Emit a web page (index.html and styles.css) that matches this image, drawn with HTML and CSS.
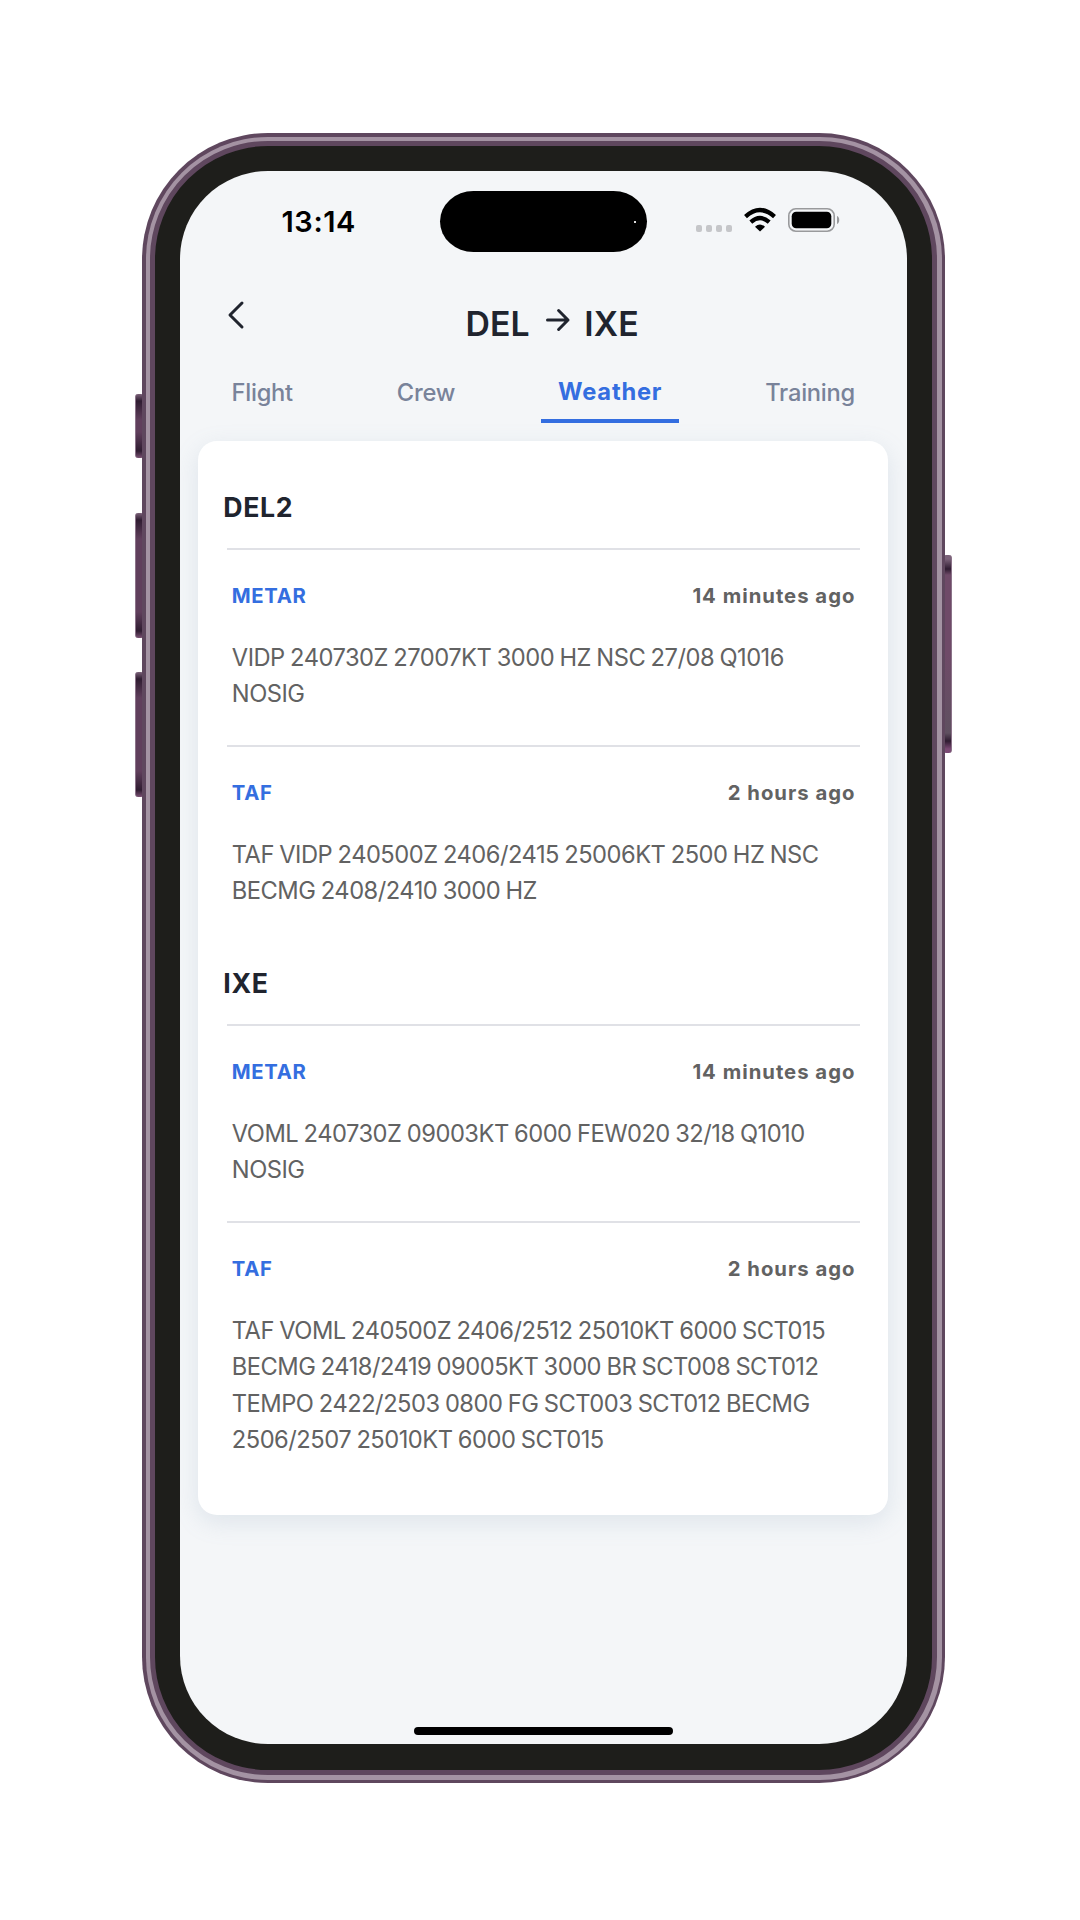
FILE: index.html
```html
<!DOCTYPE html>
<html lang="en">
<head>
<meta charset="utf-8">
<title>Flight weather</title>
<link rel="stylesheet" href="styles.css">
</head>
<body>
<main class="phone">
  <i class="key key-mute"></i><i class="key key-up"></i><i class="key key-down"></i><i class="key key-power"></i>
  <div class="rim"><div class="band"><div class="bezel">
    <div class="screen">
      <header class="status">
        <span class="time">13:14</span>
        <div class="island"><i class="lens"></i></div>
        <div class="indicators">
          <div class="signal"><i></i><i></i><i></i><i></i></div>
          <svg class="wifi" viewBox="0 0 32 24"><path d="M1.500 8.600Q16-4.600 30.500 8.600"/><path d="M6.800 14.200Q16 6 25.200 14.200"/><path class="solid" d="M11 18.800Q16 14 21 18.800L16 23.600Z"/></svg>
          <svg class="battery" viewBox="0 0 53 24"><rect class="shell" x=".8" y=".8" width="45.400" height="22.400" rx="7"/><rect x="3.700" y="3.700" width="39.600" height="16.600" rx="4.500"/><path class="nub" d="M49 8c3 1 3 7 0 8Z"/></svg>
        </div>
      </header>
      <div class="titlebar">
        <svg class="back" viewBox="0 0 16 28"><path d="M14 2 2 14 14 26"/></svg>
        <h1 class="route">DEL<svg class="arrow" viewBox="0 0 24 22"><path d="M1.500 11H22M12.600 1.500 22 11 12.600 20.500"/></svg>IXE</h1>
      </div>
      <nav class="tabs">
        <a class="tab">Flight</a><a class="tab">Crew</a><a class="tab active">Weather</a><a class="tab">Training</a>
      </nav>
      <article class="card">
        <section class="station">
          <h2>DEL2</h2>
          <div class="report">
            <div class="head"><b>METAR</b><span>14 minutes ago</span></div>
            <p>VIDP 240730Z 27007KT 3000 HZ NSC 27/08 Q1016<br>NOSIG</p>
          </div>
          <div class="report">
            <div class="head"><b>TAF</b><span>2 hours ago</span></div>
            <p>TAF VIDP 240500Z 2406/2415 25006KT 2500 HZ NSC<br>BECMG 2408/2410 3000 HZ</p>
          </div>
        </section>
        <section class="station">
          <h2>IXE</h2>
          <div class="report">
            <div class="head"><b>METAR</b><span>14 minutes ago</span></div>
            <p>VOML 240730Z 09003KT 6000 FEW020 32/18 Q1010<br>NOSIG</p>
          </div>
          <div class="report">
            <div class="head"><b>TAF</b><span>2 hours ago</span></div>
            <p>TAF VOML 240500Z 2406/2512 25010KT 6000 SCT015<br>BECMG 2418/2419 09005KT 3000 BR SCT008 SCT012<br>TEMPO 2422/2503 0800 FG SCT003 SCT012 BECMG<br>2506/2507 25010KT 6000 SCT015</p>
          </div>
        </section>
      </article>
      <div class="home"></div>
    </div>
  </div></div></div>
</main>
</body>
</html>
```
FILE: styles.css
```css
* { box-sizing: border-box; margin: 0; padding: 0; }
body { width: 1080px; height: 1920px; background: #fff; font-family: Inter, "Liberation Sans", sans-serif; color: #20242e; overflow: hidden; }
svg { display: block; fill: none; stroke: currentColor; stroke-linecap: round; stroke-linejoin: round; overflow: visible; }

/* Device frame */
.phone { position: relative; width: 803px; height: 1650px; margin: 133px 0 0 142px; }
.rim, .band, .bezel { height: 100%; }
.rim { position: relative; padding: 3.500px; border-radius: 126px; background: #5f475e; }
.band { padding: 4.500px; border-radius: 122px; background: #a493a3; }
.bezel { padding: 25px 25.500px 26px 25px; border: 5px solid #5f475e; border-radius: 118px; background: #1e1e1b; }
.screen { display: flex; flex-direction: column; height: 100%; border-radius: 88px; background: #f4f6f8; overflow: hidden; }

.key { position: absolute; width: 9px; border-radius: 3px; background: linear-gradient(#7b6279, #2f1c31 7px, #603f5c 26px, #603f5c calc(100% - 26px), #2f1c31 calc(100% - 7px), #7b5274); }
.key-mute, .key-up, .key-down { left: -7px; border-left: 1.500px solid #8b7389; }
.key-mute { top: 261px; height: 64px; }
.key-up { top: 380px; height: 125px; }
.key-down { top: 539px; height: 125px; }
.key-power { right: -7px; top: 422px; height: 198px; border-right: 1.500px solid #8b7389; background: linear-gradient(#7b6279 4px, #2f1c31 14px, #6f4a68 20px, #6f4a68 50%, #5f5060 calc(100% - 20px), #2f1c31 calc(100% - 12px), #7b4a74 calc(100% - 4px)); }

/* Status bar */
.status { display: grid; grid-template-columns: 260px 207px 1fr; height: 81px; padding-top: 20px; }
.time { padding-left: 101.500px; font-size: 29px; font-weight: 600; line-height: 61px; letter-spacing: .6px; color: #000; }
.island { display: flex; align-items: center; justify-content: flex-end; height: 61px; padding-right: 11px; border-radius: 34px / 31px; background: #000; }
.lens { width: 2px; height: 2px; background: #ddd; }
.indicators { display: flex; align-items: flex-start; padding: 17px 0 0 49px; color: #000; }
.signal { display: flex; gap: 4px; margin: 17px 12px 0 0; }
.signal i { width: 6px; height: 7px; border-radius: 2px; background: #c5c6c9; }
.wifi { width: 32px; height: 24px; margin-right: 12px; stroke-width: 4.300; stroke-linecap: butt; }
.wifi .solid { fill: #000; stroke: none; }
.battery { width: 53px; height: 24px; fill: #000; stroke: none; }
.battery .shell { fill: none; stroke: #999a9c; stroke-width: 1.600; }
.battery .nub { fill: #999a9c; }

/* Header and tabs */
.titlebar { display: flex; height: 98px; padding: 49px 0 0 47.500px; }
.back { width: 16px; height: 28px; stroke-width: 3; }
.route { display: flex; margin-left: 222px; padding-top: 2px; font-size: 33.800px; font-weight: 620; line-height: 41px; letter-spacing: .1px; }
.arrow { width: 24px; height: 22px; margin: 6px 14.500px 0 16px; stroke-width: 3; }
.tabs { display: flex; justify-content: space-between; height: 73px; padding: 0 33.500px; }
.tab { height: 73px; padding: 28px 18px 0; font-size: 23.700px; font-weight: 450; line-height: 30px; letter-spacing: -.25px; color: #79839a; }
.tab.active { padding: 27px 17px 0; border-bottom: 4px solid #346ee0; font-weight: 700; letter-spacing: .8px; color: #346ee0; }

/* Weather reports */
.card { margin: 18px 18.200px 0 18.300px; padding: 50px 25px 56.500px; border-radius: 19px; background: #fff; box-shadow: 0 7px 24px rgba(120,150,175,.18); }
.station + .station { margin-top: 57.200px; }
h2 { margin-bottom: 24px; font-size: 26.700px; font-weight: 660; line-height: 33px; letter-spacing: .6px; }
.report { margin: 0 3.500px; padding: 34px 5px 0; border-top: 2px solid #e0e1e6; }
.report + .report { margin-top: 32.200px; }
.head { display: flex; justify-content: space-between; margin-bottom: 32px; font-size: 20.300px; font-weight: 700; line-height: 24px; letter-spacing: 1px; color: #626262; }
.head span { margin-right: -.6px; }
.head b { font-weight: 700; letter-spacing: .65px; color: #346ee0; }
.report p { font-size: 23.700px; font-weight: 420; line-height: 36.400px; letter-spacing: -.5px; word-spacing: -.8px; color: #626262; white-space: nowrap; }
.home { width: 259px; height: 8px; margin: auto auto 9px 234px; border-radius: 4px; background: #000; }
```
